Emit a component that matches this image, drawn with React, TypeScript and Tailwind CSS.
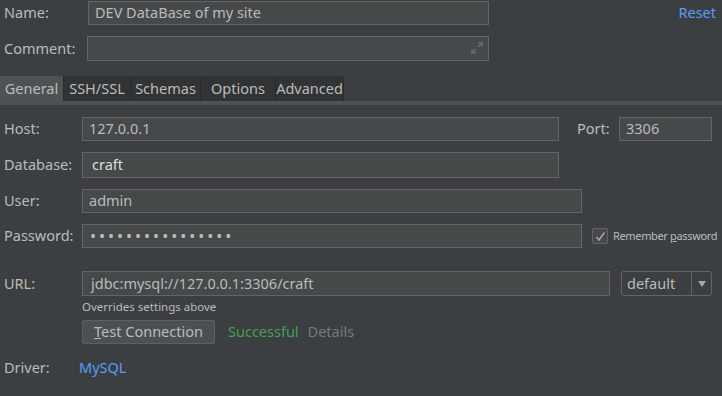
import React from "react";

const font = { fontFamily: '"Noto Sans", "DejaVu Sans", sans-serif' };

function Input({ w, h = "h-[24px]", children }: { w: string; h?: string; children?: React.ReactNode }) {
  return (
    <div className={`${w} ${h} shrink-0 relative flex items-center border border-[#646464] bg-[#45494a] px-[6px] text-[14.5px] text-[#bbbbbb] whitespace-nowrap`}>
      {children}
    </div>
  );
}

export default function App() {
  return (
    <div style={font} className="w-[722px] h-[396px] bg-[#3c3f41] text-[#bbbbbb] text-[14.5px] overflow-hidden">
      {/* Name row */}
      <div className="flex items-center h-[24px] mt-[1px]">
        <div className="w-[88px] pl-[4px] shrink-0">Name:</div>
        <Input w="w-[401px]">DEV DataBase of my site</Input>
        <div className="ml-auto mr-[6px] text-[#589df6]">Reset</div>
      </div>
      {/* Comment row */}
      <div className="flex items-center h-[25px] mt-[11px]">
        <div className="w-[87px] pl-[4px] shrink-0">Comment:</div>
        <Input w="w-[402px]" h="h-[25px]">
          <svg className="absolute right-[5px] top-[5px]" width="12" height="12" viewBox="0 0 12 12">
            <path d="M7 1h4v4M11 1L7 5M5 11H1V7M1 11l4-4" stroke="#6a6a6a" strokeWidth="1.5" fill="none" />
          </svg>
        </Input>
      </div>
      {/* Tabs */}
      <div className="mt-[15px]">
        <div className="flex h-[25px]">
          <div className="w-[63px] bg-[#4e5254] flex items-center justify-center pt-[1px] text-[#bbbbbb]">General</div>
          <div className="w-[67px] bg-[#313335] border-l border-[#2b2b2b] flex items-center justify-center pt-[1px]">SSH/SSL</div>
          <div className="w-[70px] bg-[#313335] border-l border-[#2b2b2b] flex items-center justify-center pt-[1px]">Schemas</div>
          <div className="w-[75px] bg-[#313335] border-l border-[#2b2b2b] flex items-center justify-center pt-[1px]">Options</div>
          <div className="w-[69px] bg-[#313335] border-l border-r border-[#2b2b2b] flex items-center justify-center pt-[1px]">Advanced</div>
        </div>
        <div className="h-[4px] bg-[#4e5254]" />
      </div>
      {/* Host */}
      <div className="flex items-center h-[24px] mt-[12px]">
        <div className="w-[82px] pl-[4px] shrink-0">Host:</div>
        <Input w="w-[477px]">127.0.0.1</Input>
        <div className="w-[60px] pl-[18px] shrink-0">Port:</div>
        <Input w="w-[93px]">3306</Input>
      </div>
      {/* Database */}
      <div className="flex items-center h-[26px] mt-[11px]">
        <div className="w-[82px] pl-[4px] shrink-0">Database:</div>
        <Input w="w-[477px]" h="h-[26px]"><span className="text-[#dddddd] pl-[3px]">craft</span></Input>
      </div>
      {/* User */}
      <div className="flex items-center h-[24px] mt-[11px]">
        <div className="w-[82px] pl-[4px] shrink-0">User:</div>
        <Input w="w-[500px]">admin</Input>
      </div>
      {/* Password */}
      <div className="flex items-center h-[24px] mt-[11px]">
        <div className="w-[82px] pl-[4px] shrink-0">Password:</div>
        <Input w="w-[500px]"><span className="tracking-[3px] text-[16px] pl-[1px]">••••••••••••••••</span></Input>
        <div className="ml-[10px] w-[16px] h-[16px] shrink-0 border border-[#646464] rounded-[2px] bg-[#45494a] flex items-center justify-center">
          <svg width="11" height="11" viewBox="0 0 11 11">
            <path d="M1.5 6l2.5 3L9.5 1.5" stroke="#a8a8a8" strokeWidth="1.5" fill="none" />
          </svg>
        </div>
        <div className="ml-[5px] text-[11px] tracking-[-0.35px] whitespace-nowrap">Remember <span className="underline">p</span>assword</div>
      </div>
      {/* URL */}
      <div className="flex items-center h-[25px] mt-[23px]">
        <div className="w-[82px] pl-[4px] shrink-0">URL:</div>
        <Input w="w-[528px]" h="h-[25px]"><span className="pl-[2px]">jdbc:mysql://127.0.0.1:3306/craft</span></Input>
        <div className="ml-[11px] w-[91px] h-[25px] shrink-0 border border-[#646464] rounded-[3px] flex">
          <div className="w-[69px] pl-[5px] flex items-center">default</div>
          <div className="flex-1 border-l border-[#646464] flex items-center justify-center">
            <svg width="8" height="6" viewBox="0 0 8 6"><path d="M0 0h8L4 6z" fill="#a8a8a8" /></svg>
          </div>
        </div>
      </div>
      <div className="ml-[82px] mt-[3px] text-[11.5px] h-[16px] leading-[16px]">Overrides settings above</div>
      {/* Test connection */}
      <div className="flex items-center h-[24px] mt-[5px]">
        <div className="ml-[82px] w-[133px] h-[24px] border border-[#5e6060] bg-[#4c5052] rounded-[2px] flex items-center justify-center">
          <span><span className="underline">T</span>est Connection</span>
        </div>
        <div className="ml-[13px] text-[#499c54]">Successful</div>
        <div className="ml-[9px] text-[#787878]">Details</div>
      </div>
      {/* Driver */}
      <div className="flex items-center h-[20px] mt-[14px]">
        <div className="w-[79px] pl-[4px] shrink-0">Driver:</div>
        <div className="text-[#589df6]">MySQL</div>
      </div>
    </div>
  );
}
